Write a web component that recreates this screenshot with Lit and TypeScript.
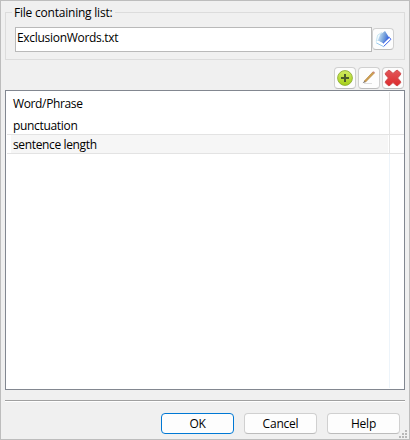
import { LitElement, html, css, svg } from "lit";
import { customElement } from "lit/decorators.js";

const bookIcon = svg`
  <path d="M2.2 11.5L3.6 5.2L7.5 2.6L5.5 10Z" fill="#f2fafe" stroke="#b5dcec" stroke-width=".7"/>
  <path d="M6.2 4.6L11 1L15.2 7.8L9.2 13.2L3.8 10.6Z" fill="url(#cover)"/>
  <path d="M2.2 11.8L4 10.8L9.2 13.6L15.6 7.5L16.8 9.3L9.6 16.6L2.2 12.9Z" fill="#fff"/>
  <path d="M2.2 12.8L9.4 16.5" stroke="#8cc4ea" stroke-width=".9"/>
  <path d="M9 13.4L15.3 7.3L16.9 9.4L9.6 16.5" stroke="#3a62ea" stroke-width="1"/>`;

@customElement("app-root")
export class AppRoot extends LitElement {
  static styles = css`
    * { box-sizing: border-box; }
    :host {
      display: flex; flex-direction: column; position: relative; box-sizing: border-box;
      width: 410px; height: 440px; padding: 4px 4px 5px; overflow: hidden;
      border: 1px solid #bdbdbd; background: #f0f0f0; color: #000;
      font: 12px/18px "Open Sans", "Noto Sans", sans-serif;
    }
    svg { display: block; }
    .group {
      display: flex; position: relative; flex: none; height: 48px; margin-top: 7px;
      padding: 14px 9px 0; border: 1px solid #dcdcdc;
    }
    .legend {
      position: absolute; left: 6px; top: -9px; width: 103px; padding-left: 2px;
      background: #f0f0f0; letter-spacing: -.22px; line-height: 18px; white-space: nowrap;
    }
    .field {
      width: 357px; height: 25px; border: 1px solid #b9b9b9; background: #fff;
      padding: 1px 0 0 1px; letter-spacing: -.3px;
    }
    .tool {
      display: grid; place-items: center; flex: none; width: 22px; height: 22px; padding: 0;
      border: 1px solid #d0d0d0; border-bottom-color: #bcbcbc; border-radius: 4px; background: #fdfdfd;
    }
    .group .tool { margin-top: 1px; }
    .tools { display: flex; flex: none; justify-content: flex-end; gap: 2px; height: 23px; margin: 7px 1px 0 0; }
    .list {
      display: grid; grid-template-columns: 1fr 14px; grid-template-rows: 43px 19px 1fr;
      flex: none; height: 300px; border: 1px solid #828790; background: #fff; padding: 1px 0 1px 1px;
    }
    .cell { padding-left: 6px; border-right: 1px solid #e3e3e3; white-space: nowrap; letter-spacing: -.32px; }
    .head { letter-spacing: -.36px; padding-top: 3px; }
    .first { padding-top: 4px; }
    .long { letter-spacing: -.36px; line-height: 20px; }
    .line { border-bottom: 1px solid #e3e3e3; }
    .shade { background: linear-gradient(#f6f6f6, #f6f6f6) 4px 0 / calc(100% - 5px) 100% no-repeat; }
    .rest { border-right-color: #edf4fa; }
    .rule { flex: none; height: 2px; margin-top: 10px; border-top: 1px solid #a0a0a0; background: #fff; }
    .actions { display: flex; justify-content: flex-end; gap: 10px; margin: 11px 5px 0 0; }
    .push {
      width: 73px; height: 21px; padding: 0; border: 1px solid #d0d0d0; border-bottom-color: #bcbcbc;
      border-radius: 4px; background: #fdfdfd; color: #000; font: inherit; text-align: center;
      letter-spacing: -.22px;
    }
    .primary { border-color: #0078d4; }
    .grip { position: absolute; right: 2px; bottom: 1px; }
  `;

  render() {
    return html`
      <div class="group">
        <div class="legend">File containing list:</div>
        <div class="field">ExclusionWords.txt</div>
        <button class="tool" aria-label="Open">
          <svg width="18" height="18" viewBox="0 0 18 18" fill="none">
            <defs><linearGradient id="cover" x1="0" x2="1" y1=".3" y2=".6">
              <stop stop-color="#d5ebfa"/><stop offset=".5" stop-color="#7fa9dc"/><stop offset="1" stop-color="#3060d8"/>
            </linearGradient></defs>${bookIcon}
          </svg>
        </button>
      </div>
      <div class="tools">
        <button class="tool" aria-label="Add">
          <svg width="18" height="18" viewBox="0 0 18 18" fill="none">
            <defs><linearGradient id="lime" x2="0" y2="1"><stop stop-color="#d2ec62"/><stop offset="1" stop-color="#a5cf18"/></linearGradient></defs>
            <circle cx="9" cy="9" r="7.4" fill="url(#lime)" stroke="#8fae35" stroke-width=".9"/>
            <path d="M9 5v8M5 9h8" stroke="#4c5c2c" stroke-width="2"/>
          </svg>
        </button>
        <button class="tool" aria-label="Edit">
          <svg width="18" height="18" viewBox="0 0 18 18" fill="none">
            <path d="M4 14.5h8" stroke="#dedede"/>
            <path d="M4.3 12L12.8 3L14.2 4.3L5.6 13Z" fill="#d0a04e" stroke="#a97b35" stroke-width=".6"/>
            <path d="M4.3 12L2.6 14.3L5.6 13Z" fill="#6b6560"/>
            <path d="M12.6 3.3L13.6 2.2L15 3.5L14 4.5Z" fill="#c9847b"/>
          </svg>
        </button>
        <button class="tool" aria-label="Delete">
          <svg width="18" height="18" viewBox="0 0 18 18" fill="none">
            <defs><linearGradient id="red" x2="0" y2="1"><stop stop-color="#e2575a"/><stop offset="1" stop-color="#dc2a2c"/></linearGradient></defs>
            <path d="M4.2 1.4Q5 1 6 1.8L9 4.4L12 1.8Q13 1 13.8 1.4L16.6 4.2Q17 5 16.2 6L13.6 9L16.2 12Q17 13 16.6 13.8L13.8 16.6Q13 17 12 16.2L9 13.6L6 16.2Q5 17 4.2 16.6L1.4 13.8Q1 13 1.8 12L4.4 9L1.8 6Q1 5 1.4 4.2Z" fill="url(#red)" stroke="#cc4142" stroke-width=".9" stroke-linejoin="round"/>
          </svg>
        </button>
      </div>
      <div class="list">
        <div class="cell line">
          <div class="head">Word/Phrase</div>
          <div class="first">punctuation</div>
        </div><div class="line"></div>
        <div class="cell line shade long">sentence length</div><div class="line"></div>
        <div class="cell rest"></div><div></div>
      </div>
      <div class="rule"></div>
      <div class="actions">
        <button class="push primary">OK</button>
        <button class="push">Cancel</button>
        <button class="push">Help</button>
      </div>
      <svg class="grip" width="8" height="8" viewBox="0 0 8 8" fill="#b8b8b8">
        <path d="M6 0h2v2H6zM3 3h2v2H3zM6 3h2v2H6zM0 6h2v2H0zM3 6h2v2H3zM6 6h2v2H6z"/>
      </svg>`;
  }
}
